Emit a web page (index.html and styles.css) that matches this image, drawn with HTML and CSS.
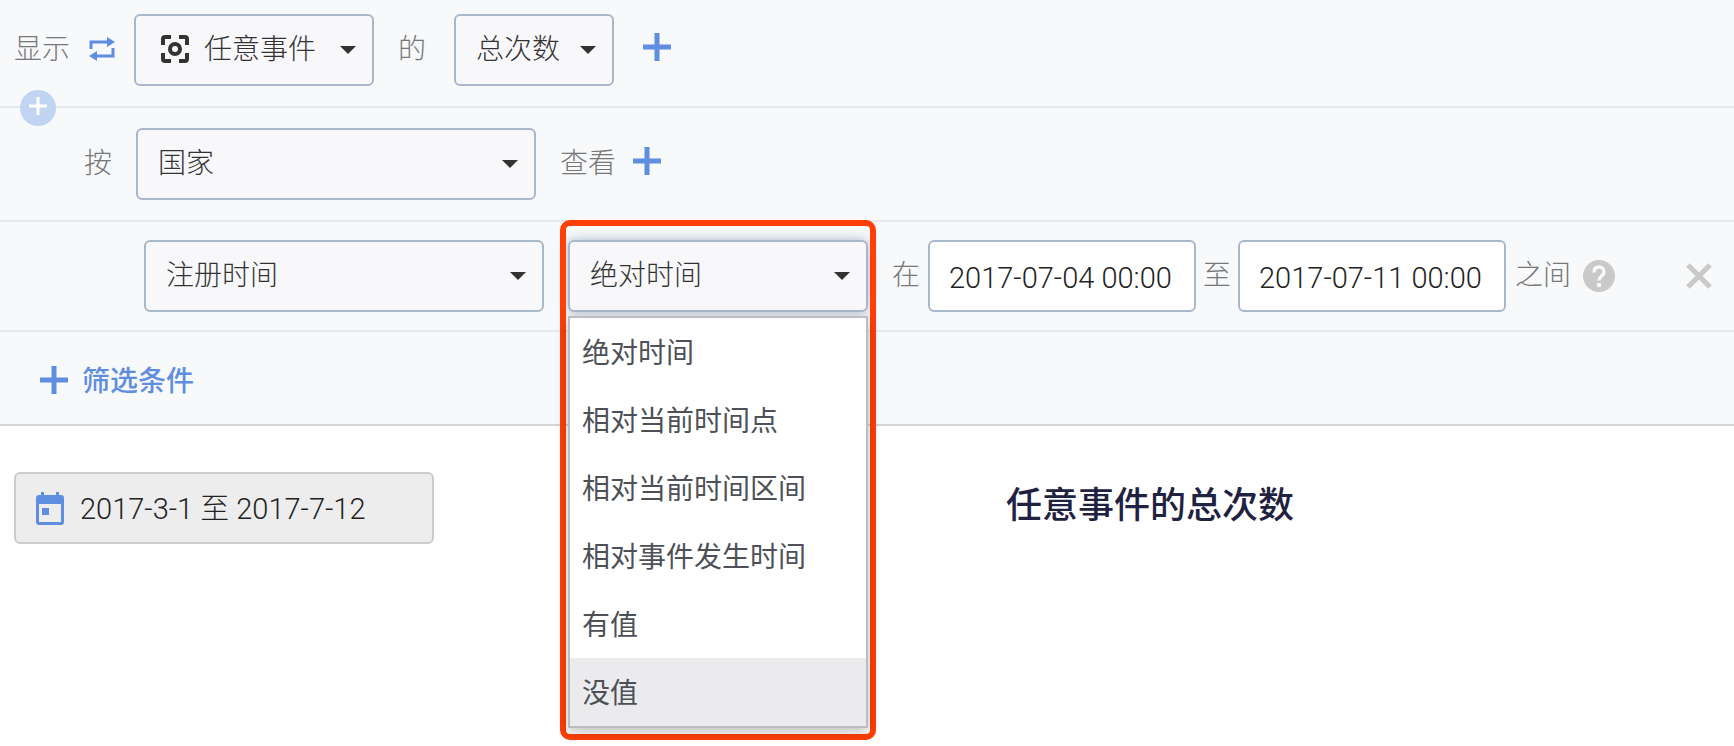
FILE: index.html
```html
<!DOCTYPE html>
<html lang="zh-CN">
<head>
<meta charset="utf-8">
<title>任意事件的总次数</title>
<link rel="stylesheet" href="styles.css">
</head>
<body>
<form class="query">
  <div class="row row-event">
    <label class="word" for="event">显示</label>
    <button class="icon-btn swap" type="button" aria-label="切换">
      <svg width="26" height="24" viewBox="0 0 26 24"><path d="M2 12V5h16" fill="none" stroke="currentColor" stroke-width="3"/><path d="M18 0l8 5-8 5z" fill="currentColor"/><path d="M24 11v8H8" fill="none" stroke="currentColor" stroke-width="3"/><path d="M8 14l-8 5 8 5z" fill="currentColor"/></svg>
    </button>
    <div class="picker picker-event">
      <svg class="lead" width="30" height="30" viewBox="0 0 30 30" fill="none" stroke="currentColor" stroke-width="4"><path d="M3 11V5q0-2 2-2h6M19 3h6q2 0 2 2v6M27 19v6q0 2-2 2h-6M11 27H5q-2 0-2-2v-6"/><circle cx="15" cy="15" r="5"/></svg>
      <select id="event"><option>任意事件</option></select>
      <svg class="caret" width="16" height="8" viewBox="0 0 16 8"><path d="M0 0h16L8 8z" fill="currentColor"/></svg>
    </div>
    <label class="word word-of" for="metric">的</label>
    <div class="picker picker-metric">
      <select id="metric"><option>总次数</option></select>
      <svg class="caret" width="16" height="8" viewBox="0 0 16 8"><path d="M0 0h16L8 8z" fill="currentColor"/></svg>
    </div>
    <button class="icon-btn add add-metric" type="button" aria-label="添加指标">
      <svg width="28" height="28" viewBox="0 0 28 28"><path d="M14 0v28M0 14h28" stroke="currentColor" stroke-width="5"/></svg>
    </button>
    <button class="round-add" type="button" aria-label="添加事件">
      <svg width="18" height="18" viewBox="0 0 18 18"><path d="M9 0v18M0 9h18" stroke="currentColor" stroke-width="3"/></svg>
    </button>
  </div>

  <div class="row row-group">
    <label class="word" for="group">按</label>
    <div class="picker picker-wide">
      <select id="group"><option>国家</option></select>
      <svg class="caret" width="16" height="8" viewBox="0 0 16 8"><path d="M0 0h16L8 8z" fill="currentColor"/></svg>
    </div>
    <span class="word word-view">查看</span>
    <button class="icon-btn add add-group" type="button" aria-label="添加分组">
      <svg width="28" height="28" viewBox="0 0 28 28"><path d="M14 0v28M0 14h28" stroke="currentColor" stroke-width="5"/></svg>
    </button>
  </div>

  <div class="row row-filter">
    <div class="picker picker-wide">
      <select id="field" aria-label="筛选属性"><option>注册时间</option></select>
      <svg class="caret" width="16" height="8" viewBox="0 0 16 8"><path d="M0 0h16L8 8z" fill="currentColor"/></svg>
    </div>
    <div class="picker picker-mode">
      <select id="mode" aria-label="时间方式"><option>绝对时间</option></select>
      <svg class="caret" width="16" height="8" viewBox="0 0 16 8"><path d="M0 0h16L8 8z" fill="currentColor"/></svg>
      <div class="highlight">
        <ul class="menu" role="listbox" aria-label="时间方式">
          <li role="option" aria-selected="true">绝对时间</li>
          <li role="option">相对当前时间点</li>
          <li role="option">相对当前时间区间</li>
          <li role="option">相对事件发生时间</li>
          <li role="option">有值</li>
          <li role="option" class="hover">没值</li>
        </ul>
      </div>
    </div>
    <label class="word word-in" for="from">在</label>
    <input class="date" id="from" type="text" value="2017-07-04 00:00">
    <label class="word word-to" for="to">至</label>
    <input class="date" id="to" type="text" value="2017-07-11 00:00">
    <span class="word word-between">之间</span>
    <button class="icon-btn help" type="button" aria-label="帮助">
      <svg width="32" height="32" viewBox="0 0 32 32"><circle cx="16" cy="16" r="16" fill="currentColor"/><path d="M11 12.500c0-3.500 2-5.500 5-5.500s5 2 5 5c0 3.700-5 4-5 8.500" fill="none" stroke="#f7f9fb" stroke-width="3.500"/><path d="M14 23h4v4h-4z" fill="#f7f9fb"/></svg>
    </button>
    <button class="icon-btn remove" type="button" aria-label="删除">
      <svg width="26" height="26" viewBox="0 0 26 26"><path d="M2 2l22 22M24 2L2 24" stroke="currentColor" stroke-width="5"/></svg>
    </button>
  </div>

  <div class="row row-add">
    <button class="add-filter" type="button">
      <svg width="28" height="28" viewBox="0 0 28 28"><path d="M14 0v28M0 14h28" stroke="currentColor" stroke-width="5"/></svg>
      <span>筛选条件</span>
    </button>
  </div>
</form>

<main class="result">
  <button class="range" type="button">
    <svg width="28" height="34" viewBox="0 0 28 34"><path fill="currentColor" fill-rule="evenodd" d="M5 0h3v3h12V0h3v3h2q3 0 3 3v24q0 3-3 3H3q-3 0-3-3V6q0-3 3-3h2zM3 12v18h22V12z"/><path d="M6 16h7v7H6z" fill="currentColor"/></svg>
    <span>2017-3-1 至 2017-7-12</span>
  </button>
  <h1>任意事件的总次数</h1>
</main>
</body>
</html>
```
FILE: styles.css
```css
* { box-sizing: border-box; }

body {
  min-height: 100vh;
  margin: 0;
  background: #fff;
  color: #333;
  font: 300 28px/40px Roboto, "Noto Sans CJK SC", sans-serif;
}

button, select, input { font: inherit; color: inherit; }

.query {
  background: #f7f9fb;
  border-bottom: 2px solid #d3d6d9;
}

.row {
  display: flex;
  align-items: center;
  border-bottom: 2px solid #e9eaec;
}

.row-event { position: relative; padding: 14px 14px 20px; }
.row-group { padding: 20px 14px 20px 84px; }
.row-filter { padding: 18px 22px 18px 144px; }
.row-add { padding: 26px 38px 22px; border-bottom: 0; }

.word {
  flex: none;
  color: #777;
  white-space: nowrap;
}

.word-of { margin: 0 28px 0 24px; }
.word-view { margin-left: 24px; }
.word-in { margin: 0 8px 0 24px; }
.word-to { margin: 0 7px; }
.word-between { margin-left: 9px; }
.row-group .word:first-child { margin-right: 24px; }

.icon-btn {
  display: flex;
  flex: none;
  padding: 0;
  border: 0;
  background: none;
  color: #5f8ee0;
}

.swap { margin: 0 19px 2px; }
.add { margin-bottom: 6px; }
.add-metric { margin-left: 29px; }
.add-group { margin-left: 17px; }
.help { margin-left: 12px; color: #c9c9c9; }
.remove { margin-left: auto; color: #c9c9c9; }

.picker {
  position: relative;
  display: grid;
  flex: none;
  align-items: center;
}

.picker > select, .picker > .caret, .picker > .lead { grid-area: 1 / 1; }

.picker-event { width: 240px; }
.picker-metric { width: 160px; }
.picker-wide { width: 400px; }
.picker-mode { width: 300px; margin-left: 24px; }

select {
  width: 100%;
  height: 72px;
  padding: 0 40px 0 20px;
  border: 2px solid #a9b7ca;
  border-radius: 6px;
  background: #f8f8fb;
  appearance: none;
}

.picker-event select { padding-left: 68px; }
.picker-mode select { box-shadow: 0 0 12px #a9b7ca; }

.caret, .lead { z-index: 1; pointer-events: none; }
.caret { justify-self: end; margin-right: 18px; }
.lead { margin: 0 0 2px 26px; }

.highlight {
  position: absolute;
  z-index: 2;
  top: -20px;
  left: -8px;
  right: -8px;
  padding: 90px 2px 6px;
  border: 6px solid #ff3f05;
  border-radius: 10px;
  pointer-events: none;
}

.menu {
  margin: 0;
  padding: 0;
  border: 2px solid #bcbdc1;
  background: #fff;
  box-shadow: 0 4px 12px rgba(0, 0, 0, .25);
  color: #4d5057;
  font-weight: 400;
  list-style: none;
  pointer-events: auto;
}

.menu li { padding: 16px 12px 12px; white-space: nowrap; }
.menu .hover { background: #ebebed; }

.date {
  flex: 0 1 268px;
  min-width: 0;
  height: 72px;
  padding: 4px 19px 0;
  border: 2px solid #a9b7ca;
  border-radius: 6px;
  background: #fff;
  color: #222;
  font-size: 29px;
}

.round-add {
  position: absolute;
  left: 20px;
  bottom: -20px;
  display: grid;
  place-items: center;
  width: 36px;
  height: 36px;
  padding: 0 0 4px;
  border: 0;
  border-radius: 50%;
  background: #c1d5f3;
  color: #fff;
}

.add-filter {
  display: flex;
  align-items: center;
  gap: 14px;
  padding: 0 2px;
  border: 0;
  background: none;
  color: #5f8ee0;
  font-weight: 500;
}

.add-filter span { padding-top: 4px; }

.result {
  display: flex;
  align-items: center;
  padding: 46px 0 0 14px;
}

.range {
  display: flex;
  flex: none;
  align-items: center;
  gap: 16px;
  width: 420px;
  height: 72px;
  padding: 2px 20px 0;
  border: 2px solid #cdcdcd;
  border-radius: 6px;
  background: #ededed;
  color: #222;
  font-size: 29px;
}

.range svg { color: #5f8ee0; }

h1 {
  flex: 1;
  margin: 0 0 0 132px;
  padding-bottom: 4px;
  color: #1f2240;
  font-size: 36px;
  font-weight: 500;
  text-align: center;
}
```
